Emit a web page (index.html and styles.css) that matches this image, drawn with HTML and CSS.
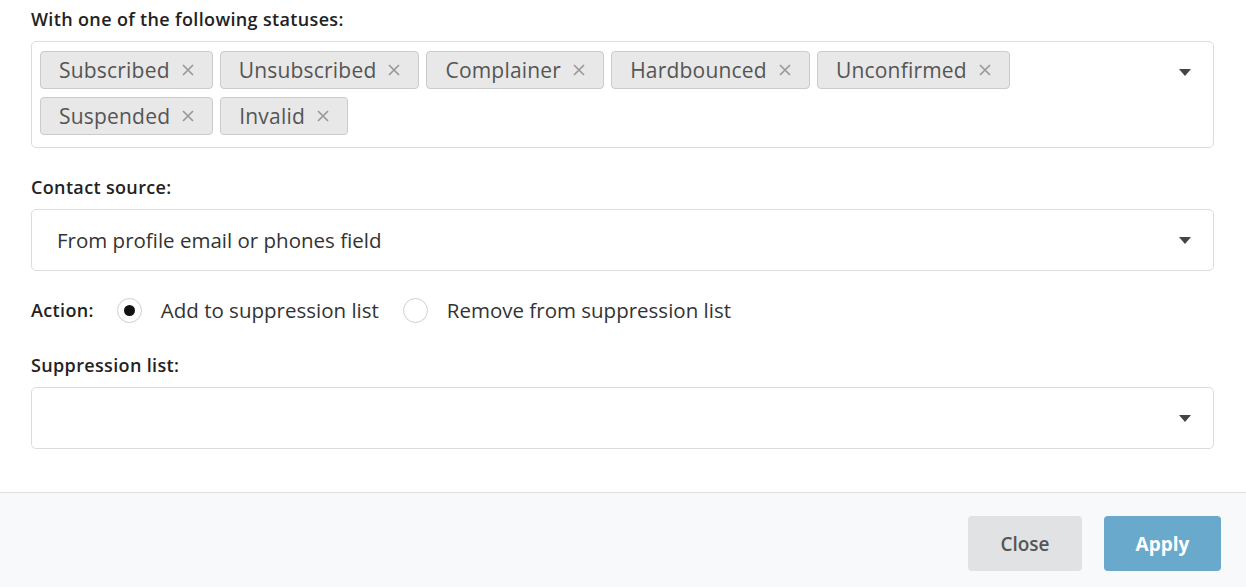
FILE: index.html
```html
<!DOCTYPE html>
<html>
<head>
<meta charset="utf-8">
<link rel="stylesheet" href="styles.css">
</head>
<body>
<div class="dialog">
  <div class="content">
    <div class="field">
      <div class="label">With one of the following statuses:</div>
      <div class="select multi">
        <div class="tags">
          <span class="tag">Subscribed<svg class="x" viewBox="0 0 12 12"><path d="M1 1L11 11M11 1L1 11"/></svg></span>
          <span class="tag">Unsubscribed<svg class="x" viewBox="0 0 12 12"><path d="M1 1L11 11M11 1L1 11"/></svg></span>
          <span class="tag">Complainer<svg class="x" viewBox="0 0 12 12"><path d="M1 1L11 11M11 1L1 11"/></svg></span>
          <span class="tag">Hardbounced<svg class="x" viewBox="0 0 12 12"><path d="M1 1L11 11M11 1L1 11"/></svg></span>
          <span class="tag">Unconfirmed<svg class="x" viewBox="0 0 12 12"><path d="M1 1L11 11M11 1L1 11"/></svg></span>
          <span class="tag">Suspended<svg class="x" viewBox="0 0 12 12"><path d="M1 1L11 11M11 1L1 11"/></svg></span>
          <span class="tag">Invalid<svg class="x" viewBox="0 0 12 12"><path d="M1 1L11 11M11 1L1 11"/></svg></span>
        </div>
        <span class="caret"></span>
      </div>
    </div>
    <div class="field">
      <div class="label">Contact source:</div>
      <div class="select single">
        <span class="value">From profile email or phones field</span>
        <span class="caret"></span>
      </div>
    </div>
    <div class="action-row">
      <span class="label inline">Action:</span>
      <label class="radio"><span class="dot checked"></span>Add to suppression list</label>
      <label class="radio"><span class="dot"></span>Remove from suppression list</label>
    </div>
    <div class="field">
      <div class="label">Suppression list:</div>
      <div class="select single">
        <span class="value"></span>
        <span class="caret"></span>
      </div>
    </div>
  </div>
  <div class="footer">
    <button class="btn close">Close</button>
    <button class="btn apply">Apply</button>
  </div>
</div>
</body>
</html>
```

FILE: styles.css
```css
* { box-sizing: border-box; }
html, body { margin: 0; padding: 0; background: #fff; }
body {
  font-family: "Open Sans", "Noto Sans", sans-serif;
  color: #333;
  width: 1246px;
  height: 587px;
  overflow: hidden;
}
.dialog { display: flex; flex-direction: column; height: 587px; }
.content {
  padding: 6px 32px 0 31px;
  height: 493px;
  border-bottom: 1px solid #dcdee2;
}
.label {
  font-size: 18px;
  font-weight: 600;
  letter-spacing: 0.35px;
  color: #222;
  line-height: 26px;
  margin-bottom: 9px;
}
.select {
  border: 1px solid #dcdcdc;
  border-radius: 5px;
  display: flex;
  align-items: flex-start;
  position: relative;
  background: #fff;
}
.select.multi {
  padding: 9px 40px 12px 8px;
  min-height: 107px;
  margin-bottom: 26px;
}
.select.single {
  height: 62px;
  align-items: center;
  padding: 0 25px;
  margin-bottom: 26px;
}
.tags { display: flex; flex-wrap: wrap; gap: 8px 7px; }
.tag {
  display: inline-flex;
  align-items: center;
  height: 38px;
  padding: 0 18px;
  background: #e8e8e8;
  border: 1px solid #cbcbcb;
  border-radius: 4px;
  font-size: 21px;
  letter-spacing: 0.2px;
  color: #555;
}
.tag .x {
  width: 12px;
  height: 12px;
  margin-left: 12px;
  stroke: #999;
  stroke-width: 1.7;
  fill: none;
}
.value {
  font-size: 20.5px;
  color: #333;
  flex: 1;
}
.caret {
  position: absolute;
  right: 22px;
  width: 0;
  height: 0;
  border-left: 6px solid transparent;
  border-right: 6px solid transparent;
  border-top: 7px solid #444;
}
.select.multi .caret { top: 27px; }
.select.single .caret { top: 27px; }
.action-row {
  display: flex;
  align-items: center;
  height: 40px;
  margin-top: -7px;
  margin-bottom: 22px;
}
.label.inline { margin: 0 23px 0 0; }
.radio {
  display: inline-flex;
  align-items: center;
  font-size: 20.5px;
  color: #333;
  margin-right: 24px;
}
.dot {
  width: 25px;
  height: 25px;
  border-radius: 50%;
  border: 1px solid #cfcfcf;
  margin-right: 19px;
  position: relative;
  background: #fff;
}
.dot.checked::after {
  content: "";
  position: absolute;
  left: 6px;
  top: 6px;
  width: 11px;
  height: 11px;
  border-radius: 50%;
  background: #111;
}
.footer {
  flex: 1;
  background: #f8f9fa;
  display: flex;
  justify-content: flex-end;
  align-items: flex-start;
  padding: 23px 25px 0 0;
  gap: 22px;
}
.btn {
  height: 55px;
  border: none;
  border-radius: 4px;
  font-family: inherit;
  font-size: 19px;
  font-weight: 600;
  cursor: pointer;
}
.btn.close { width: 114px; background: #e1e2e4; color: #555; }
.btn.apply { width: 117px; background: #69a9cb; color: #fff; font-weight: 700; }
```
